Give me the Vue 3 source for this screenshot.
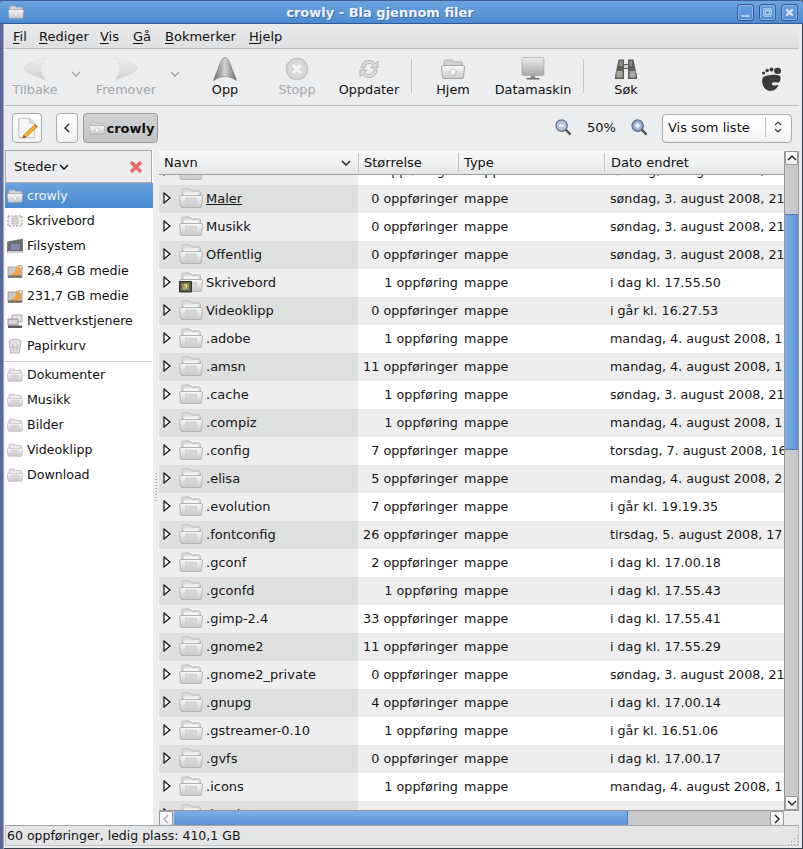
<script setup>
const menus = [
  { key: 'F', rest: 'il', w: 26 },
  { key: 'R', rest: 'ediger', w: 61 },
  { key: 'V', rest: 'is', w: 33 },
  { key: 'G', rest: 'å', w: 32 },
  { key: 'B', rest: 'okmerker', w: 84 },
  { key: 'H', rest: 'jelp', w: 40 },
]

const tools = [
  { label: 'Tilbake', icon: 'i-back', w: 60, off: true },
  { arrow: true, w: 21 },
  { label: 'Fremover', icon: 'i-forward', w: 80, off: true },
  { arrow: true, w: 18 },
  { label: 'Opp', icon: 'i-up', w: 82 },
  { label: 'Stopp', icon: 'i-stop', w: 62, off: true },
  { label: 'Oppdater', icon: 'i-reload', w: 82 },
  { sep: true, ml: 1 },
  { label: 'Hjem', icon: 'i-home', w: 82 },
  { label: 'Datamaskin', icon: 'i-computer', w: 78 },
  { sep: true, ml: 11 },
  { label: 'Søk', icon: 'i-binoculars', w: 84 },
]

const places = [
  { name: 'crowly', icon: 'i-home', active: true },
  { name: 'Skrivebord', icon: 'i-desktop' },
  { name: 'Filsystem', icon: 'i-filesystem' },
  { name: '268,4 GB medie', icon: 'i-drive' },
  { name: '231,7 GB medie', icon: 'i-drive' },
  { name: 'Nettverkstjenere', icon: 'i-network' },
  { name: 'Papirkurv', icon: 'i-trash' },
]

const bookmarks = ['Dokumenter', 'Musikk', 'Bilder', 'Videoklipp', 'Download']

const sun = 'søndag, 3. august 2008, 21'
const mon = 'mandag, 4. august 2008, 1'

const files = [
  ['Download', '0 oppføringer', sun],
  ['Maler', '0 oppføringer', sun],
  ['Musikk', '0 oppføringer', sun],
  ['Offentlig', '0 oppføringer', sun],
  ['Skrivebord', '1 oppføring', 'i dag kl. 17.55.50'],
  ['Videoklipp', '0 oppføringer', 'i går kl. 16.27.53'],
  ['.adobe', '1 oppføring', mon],
  ['.amsn', '11 oppføringer', mon],
  ['.cache', '1 oppføring', sun],
  ['.compiz', '1 oppføring', mon],
  ['.config', '7 oppføringer', 'torsdag, 7. august 2008, 16'],
  ['.elisa', '5 oppføringer', 'mandag, 4. august 2008, 2'],
  ['.evolution', '7 oppføringer', 'i går kl. 19.19.35'],
  ['.fontconfig', '26 oppføringer', 'tirsdag, 5. august 2008, 17'],
  ['.gconf', '2 oppføringer', 'i dag kl. 17.00.18'],
  ['.gconfd', '1 oppføring', 'i dag kl. 17.55.43'],
  ['.gimp-2.4', '33 oppføringer', 'i dag kl. 17.55.41'],
  ['.gnome2', '11 oppføringer', 'i dag kl. 17.55.29'],
  ['.gnome2_private', '0 oppføringer', sun],
  ['.gnupg', '4 oppføringer', 'i dag kl. 17.00.14'],
  ['.gstreamer-0.10', '1 oppføring', 'i går kl. 16.51.06'],
  ['.gvfs', '0 oppføringer', 'i dag kl. 17.00.17'],
  ['.icons', '1 oppføring', mon],
  ['.local', '3 oppføringer', 'i dag kl. 17.00.14'],
]
</script>

<template>
  <div class="window">
    <!-- shared icons -->
    <svg class="defs" xmlns="http://www.w3.org/2000/svg">
      <defs>
        <linearGradient id="g-folder" x1="0" y1="0" x2="0" y2="1">
          <stop offset="0" stop-color="#fafafa" />
          <stop offset="1" stop-color="#c8c8c8" />
        </linearGradient>
        <linearGradient id="g-back" x1="0" y1="0" x2="0" y2="1">
          <stop offset="0" stop-color="#eeeff0" />
          <stop offset="1" stop-color="#cdcecf" />
        </linearGradient>
        <linearGradient id="g-up" x1="0" y1="0" x2="1" y2="0">
          <stop offset="0" stop-color="#6a6a6a" />
          <stop offset="0.5" stop-color="#d4d4d4" />
          <stop offset="1" stop-color="#6a6a6a" />
        </linearGradient>
        <linearGradient id="g-screen" x1="0" y1="0" x2="0" y2="1">
          <stop offset="0" stop-color="#ececec" />
          <stop offset="1" stop-color="#a8a8a8" />
        </linearGradient>
      </defs>
      <symbol id="i-folder" viewBox="0 0 24 24">
        <path d="M3 9V4.500Q3 3 4.500 3H11L13 5H20Q21.500 5 21.500 6.500V9Z" fill="#dcdcdc" stroke="#b8b8b8" />
        <path d="M5 6.500H19V10H5Z" fill="#f5f5f5" />
        <path d="M2 9.500H22Q23.500 9.500 23.500 11L22.500 20Q22.300 21.500 21 21.500H3Q1.700 21.500 1.500 20L.5 11Q.5 9.500 2 9.500Z" fill="url(#g-folder)" stroke="#b4b4b4" />
        <path d="M6.500 12H17.500V18H6.500Z" fill="#d6d6d6" stroke="#c4c4c4" stroke-width=".5" />
      </symbol>
      <symbol id="i-folder-emblem" viewBox="0 0 24 24">
        <use href="#i-folder" width="24" height="24" />
        <path d="M.5 11.500H12.500V22H.5Z" fill="#5c5e48" stroke="#2e2e28" />
        <path d="M3 13.500H10V20H3Z" fill="#94927a" />
        <path d="M5 15H7.500V16.500L6.500 17.500V18.500" fill="none" stroke="#f2d94a" stroke-width="1.300" />
      </symbol>
      <symbol id="i-back" viewBox="0 0 24 24">
        <path d="M23 .5C16 3.500 1 6.500 .5 11.500C1 16.500 15 19 23 23.500C19 18 18 15 18 12C18 8.500 20 4.500 23 .5Z" fill="url(#g-back)" stroke="#d6d7d8" stroke-width=".5" />
      </symbol>
      <symbol id="i-forward" viewBox="0 0 24 24">
        <path d="M1 .5C8 3.500 23 6.500 23.500 11.500C23 16.500 9 19 1 23.500C5 18 6 15 6 12C6 8.500 4 4.500 1 .5Z" fill="url(#g-back)" stroke="#d6d7d8" stroke-width=".5" />
      </symbol>
      <symbol id="i-up" viewBox="0 0 24 24">
        <path d="M12 .5C9 1 8 4 6 9C4 15 2 19 .5 23.500C5 20.500 9 19.500 12 19.500C15 19.500 19 20.500 23.500 23.500C22 19 20 15 18 9C16 4 15 1 12 .5Z" fill="url(#g-up)" stroke="#6a6a6a" stroke-width=".5" />
      </symbol>
      <symbol id="i-stop" viewBox="0 0 24 24">
        <circle cx="12" cy="12" r="10.500" fill="#d8d9da" stroke="#c2c3c4" stroke-width="1.500" />
        <path d="M8 8L16 16M16 8L8 16" stroke="#f6f6f6" stroke-width="3" />
      </symbol>
      <symbol id="i-reload" viewBox="0 0 24 24">
        <path d="M4 11C4.500 6 8 3.500 12 3.500C15 3.500 17 4.500 18.500 6.500L21 4V11H14L16.500 8.500C15.500 7.300 14 6.500 12 6.500C9.500 6.500 7.800 8.300 7.500 11Z" fill="#d9dadb" stroke="#a9aaab" stroke-width=".8" />
        <path d="M20 13C19.500 18 16 20.500 12 20.500C9 20.500 7 19.500 5.500 17.500L3 20V13H10L7.500 15.500C8.500 16.700 10 17.500 12 17.500C14.500 17.500 16.200 15.700 16.500 13Z" fill="#d9dadb" stroke="#a9aaab" stroke-width=".8" />
      </symbol>
      <symbol id="i-home" viewBox="0 0 24 24">
        <path d="M3 9V4.500Q3 3 4.500 3H11L13 5H20Q21.500 5 21.500 6.500V9Z" fill="#d2d2d2" stroke="#b0b0b0" />
        <path d="M2 8.500H22Q23.500 8.500 23.500 10L22.500 20Q22.300 21.500 21 21.500H3Q1.700 21.500 1.500 20L.5 10Q.5 8.500 2 8.500Z" fill="url(#g-folder)" stroke="#a5a5a5" />
        <path d="M12 11.500L16 15H14.500V18H9.500V15H8Z" fill="#f4f4f4" stroke="#aaa" stroke-width=".6" />
      </symbol>
      <symbol id="i-computer" viewBox="0 0 24 24">
        <rect x="1" y=".5" width="22" height="18" rx="1.500" fill="url(#g-screen)" stroke="#9d9d9d" stroke-width=".6" />
        <path d="M10 18.500H14L14.500 21H9.500Z" fill="#8c8c8c" />
        <path d="M5.500 21H18.500V22.500H5.500Z" fill="#6f6f6f" />
      </symbol>
      <symbol id="i-binoculars" viewBox="0 0 24 24">
        <path d="M4.500 2.500H10V7H14V2.500H19.500L23 19V22H14V12H10V22H1V19Z" fill="#5d5f5a" />
        <path d="M2.500 14H8.500V20.500H2.500ZM15.500 14H21.500V20.500H15.500Z" fill="#a4a69f" />
        <path d="M6 4H8.500V9H5ZM15.500 4H18V9H15.500Z" fill="#8d8f88" />
        <path d="M10 8H14V11H10Z" fill="#cfd0ca" />
      </symbol>
      <symbol id="i-foot" viewBox="0 0 24 30">
        <circle cx="2.800" cy="7" r="1.800" fill="#3a3a3a" />
        <circle cx="7" cy="4" r="2" fill="#3a3a3a" />
        <circle cx="12" cy="2.800" r="2.300" fill="#3a3a3a" />
        <ellipse cx="19" cy="4.500" rx="4" ry="3.500" fill="#3a3a3a" />
        <path d="M2 12C6 8.500 18 8 22 10.500C23.500 15 21 19 18 18C15.500 17 11.500 18 12.500 20C13.500 22 17 21.500 20 20.500C19 25 14 28.500 9 27.500C3 26.500 -.5 18 2 12Z" fill="#3a3a3a" />
      </symbol>
      <symbol id="i-note" viewBox="0 0 24 24">
        <path d="M3 1.500H15L20 6.500V22.500H3Z" fill="#f4f4f4" stroke="#bdbdbd" />
        <path d="M15 1.500V6.500H20" fill="#dcdcdc" stroke="#bdbdbd" />
        <path d="M21 8L23.500 10.500L11 22L7.500 23L8.500 19.500Z" fill="#f0b429" stroke="#b5741a" stroke-width=".7" />
        <path d="M8.500 19.500L7.500 23L11 22Z" fill="#7a4a1e" />
        <path d="M20 9L22.500 11.500L23.500 10.500L21 8Z" fill="#d9534a" />
      </symbol>
      <symbol id="i-desktop" viewBox="0 0 16 16">
        <path d="M1 3H15V13H1Z" fill="#efefef" stroke="#8d8d8d" stroke-dasharray="2 1.500" />
        <path d="M5 5H11V11H5Z" fill="#d5d5d5" stroke="#bdbdbd" />
      </symbol>
      <symbol id="i-filesystem" viewBox="0 0 16 16">
        <path d="M.5 4L15.500 1V14.500H.5Z" fill="#6d6d6d" stroke="#555" stroke-width=".6" />
        <path d="M4 6H13V12H4Z" fill="#7f86b2" />
        <path d="M.5 13H15.500V15H.5Z" fill="#cfcfcf" />
      </symbol>
      <symbol id="i-drive" viewBox="0 0 16 16">
        <path d="M1 4H15V14.500H1Z" fill="#c9c9c9" stroke="#8b8b8b" stroke-width=".7" />
        <path d="M11 2.500H15.500V6H11Z" fill="#dedede" stroke="#9a9a9a" stroke-width=".6" />
        <path d="M9.500 2.500A6 6 0 1 1 3 11.500C7 11 9 8 9.500 2.500Z" fill="#eea345" />
        <path d="M1 12.500H15V14.500H1Z" fill="#6d6d6d" />
      </symbol>
      <symbol id="i-network" viewBox="0 0 16 16">
        <path d="M5 2H15V9H5Z" fill="#e8e8e8" stroke="#8f8f8f" stroke-width=".8" />
        <path d="M1 6H11V12H1Z" fill="#d6d6d6" stroke="#7c7c7c" stroke-width=".8" />
        <path d="M1 12.500H15V15H1Z" fill="#5c5c5c" />
      </symbol>
      <symbol id="i-trash" viewBox="0 0 16 16">
        <path d="M2 3C4 .5 12 .5 14 3L12.500 15H3.500Z" fill="#dfdfdf" stroke="#a9a9a9" stroke-width=".8" />
        <path d="M5 6L7 13M11 6L9 13M4 9L12 9" stroke="#b6b6b6" stroke-width=".8" />
      </symbol>
    </svg>

    <header class="titlebar">
      <svg class="title-icon"><use href="#i-home" /></svg>
      <span class="title">crowly - Bla gjennom filer</span>
      <div class="wm-buttons">
        <span class="wm-btn">
          <svg viewBox="0 0 16 16"><path d="M3.500 11.500H12.500V13H3.500Z" fill="none" stroke="#dbe7f5" /></svg>
        </span>
        <span class="wm-btn">
          <svg viewBox="0 0 16 16"><path d="M3.500 3.500H12.500V12.500H3.500ZM5.500 5.500H10.500V10.500H5.500Z" fill="none" stroke="#dbe7f5" /></svg>
        </span>
        <span class="wm-btn">
          <svg viewBox="0 0 16 16"><path d="M4 4L12 12M12 4L4 12" stroke="#dbe7f5" stroke-width="3" /></svg>
        </span>
      </div>
    </header>

    <nav class="menubar">
      <span v-for="m in menus" :key="m.key" class="menu-item" :style="{ width: m.w + 'px' }"><u>{{ m.key }}</u>{{ m.rest }}</span>
    </nav>

    <div class="toolbar">
      <template v-for="(t, i) in tools" :key="i">
        <span v-if="t.sep" class="tool-sep" :style="{ marginLeft: t.ml + 'px' }"></span>
        <span v-else-if="t.arrow" class="tool-arrow" :style="{ width: t.w + 'px' }">
          <svg width="10" height="6" viewBox="0 0 10 6"><path d="M1 1L5 5L9 1" fill="none" stroke="#a3a4a5" stroke-width="1.300" /></svg>
        </span>
        <div v-else class="tool" :class="{ off: t.off }" :style="{ width: t.w + 'px' }">
          <svg class="tool-icon"><use :href="'#' + t.icon" /></svg>
          <span>{{ t.label }}</span>
        </div>
      </template>
      <svg class="foot"><use href="#i-foot" /></svg>
    </div>

    <div class="locationbar">
      <button class="btn edit-btn"><svg class="edit-icon"><use href="#i-note" /></svg></button>
      <button class="btn back-btn">
        <svg width="6" height="10" viewBox="0 0 6 10"><path d="M5 1L1 5L5 9" fill="none" stroke="#222" stroke-width="1.400" /></svg>
      </button>
      <button class="btn crumb">
        <svg class="crumb-icon"><use href="#i-home" /></svg>
        crowly
      </button>
      <div class="zoom-group">
        <svg class="zoom-icon" viewBox="0 0 18 18">
          <path d="M11 11L16.500 16.500" stroke="#555" stroke-width="2.500" />
          <circle cx="7" cy="7" r="6" fill="#b4c4da" stroke="#5b6a7c" stroke-width="1.300" />
          <path d="M4 7H10" stroke="#f4f6fa" stroke-width="2" />
        </svg>
        <span class="zoom-level">50%</span>
        <svg class="zoom-icon" viewBox="0 0 18 18">
          <path d="M11 11L16.500 16.500" stroke="#555" stroke-width="2.500" />
          <circle cx="7" cy="7" r="6" fill="#8fabd6" stroke="#5b6a7c" stroke-width="1.300" />
          <path d="M4 7H10M7 4V10" stroke="#f4f6fa" stroke-width="2" />
        </svg>
      </div>
      <div class="combo">
        <span>Vis som liste</span>
        <span class="combo-sep"></span>
        <svg width="8" height="14" viewBox="0 0 8 14"><path d="M1 5L4 2L7 5M1 9L4 12L7 9" fill="none" stroke="#333" stroke-width="1.200" /></svg>
      </div>
    </div>

    <div class="panes">
      <aside class="sidebar">
        <div class="side-head">
          <span>Steder</span>
          <svg class="side-chevron" width="10" height="6" viewBox="0 0 10 6"><path d="M1 1L5 5L9 1" fill="none" stroke="#111" stroke-width="1.500" /></svg>
          <svg class="side-close" width="14" height="14" viewBox="0 0 14 14">
            <path d="M2 2L12 12M12 2L2 12" stroke="#e8696a" stroke-width="3.500" />
          </svg>
        </div>
        <ul class="places">
          <li v-for="p in places" :key="p.name" class="place" :class="{ active: p.active }">
            <svg class="place-icon"><use :href="'#' + p.icon" /></svg>
            {{ p.name }}
          </li>
        </ul>
        <div class="places-sep"></div>
        <ul class="places">
          <li v-for="b in bookmarks" :key="b" class="place">
            <svg class="place-icon"><use href="#i-folder" /></svg>
            {{ b }}
          </li>
        </ul>
      </aside>

      <div class="splitter"><span class="grip"></span></div>

      <section class="browser">
        <div class="browser-top">
          <div class="listing">
            <div class="head-row">
              <div class="col-head first">Navn
                <svg class="sort" width="10" height="6" viewBox="0 0 10 6"><path d="M1 1L5 5L9 1" fill="none" stroke="#222" stroke-width="1.500" /></svg>
              </div>
              <div class="col-head">Størrelse</div>
              <div class="col-head">Type</div>
              <div class="col-head last">Dato endret</div>
            </div>
            <div class="rows">
              <div v-for="(f, i) in files" :key="f[0]" class="row" :class="{ shaded: i % 2 === 1 }">
                <div class="cell name">
                  <svg class="expander" width="8" height="12" viewBox="0 0 8 12"><path d="M1 1L7 6L1 11Z" fill="#fff" stroke="#000" stroke-width="1.100" /></svg>
                  <svg class="file-icon"><use :href="f[0] === 'Skrivebord' ? '#i-folder-emblem' : '#i-folder'" /></svg>
                  <span :class="{ hover: f[0] === 'Maler' }">{{ f[0] }}</span>
                </div>
                <div class="cell size">{{ f[1] }}</div>
                <div class="cell type">mappe</div>
                <div class="cell date">{{ f[2] }}</div>
              </div>
            </div>
          </div>
          <div class="vscroll">
            <span class="sb-btn">
              <svg width="10" height="6" viewBox="0 0 10 6"><path d="M1 5L5 1L9 5" fill="none" stroke="#222" stroke-width="1.400" /></svg>
            </span>
            <span class="vthumb"></span>
            <span class="sb-fill"></span>
            <span class="sb-btn">
              <svg width="10" height="6" viewBox="0 0 10 6"><path d="M1 1L5 5L9 1" fill="none" stroke="#222" stroke-width="1.400" /></svg>
            </span>
          </div>
        </div>
        <div class="hscroll">
          <span class="sb-btn small">
            <svg width="6" height="10" viewBox="0 0 6 10"><path d="M5 1L1 5L5 9" fill="none" stroke="#aaa" stroke-width="1.400" /></svg>
          </span>
          <span class="hthumb"></span>
          <span class="sb-fill"></span>
          <span class="sb-btn small">
            <svg width="6" height="10" viewBox="0 0 6 10"><path d="M1 1L5 5L1 9" fill="none" stroke="#222" stroke-width="1.400" /></svg>
          </span>
          <span class="corner"></span>
        </div>
      </section>
    </div>

    <footer class="statusbar">
      <span>60 oppføringer, ledig plass: 410,1 GB</span>
      <span class="resize-grip"></span>
    </footer>
  </div>
</template>

<style>
html,
body {
  margin: 0;
  background: #eaebec;
}
</style>

<style scoped>
.window {
  width: 803px;
  height: 849px;
  box-sizing: border-box;
  display: flex;
  flex-direction: column;
  overflow: hidden;
  padding: 0 4px 3px 5px;
  background: #eaebec;
  box-shadow: inset 3px 0 0 #56689c, inset 4px 0 0 #a7a9ad, inset -1px 0 0 #3a3f4c, inset 0 -1px 0 #3a3f4c;
  font-family: "DejaVu Sans", sans-serif;
  font-size: 13px;
  color: #111;
}

.defs {
  display: block;
  width: 0;
  height: 0;
  flex: none;
}

.titlebar {
  flex: none;
  height: 24px;
  margin: 0 -4px 0 -5px;
  display: flex;
  align-items: center;
  justify-content: center;
  background: linear-gradient(#6da4e0, #4d8ad2);
  border-top: 1px solid #3a5f96;
  border-bottom: 1px solid #2f5a96;
  box-sizing: border-box;
  border-radius: 3px 3px 0 0;
  position: relative;
}

.title {
  color: #f2f6fb;
  font-weight: bold;
  font-size: 13px;
  text-shadow: 1px 1px 0 #3a6bab;
  margin-left: -43px;
}

/* the two ends of the bar sit over the centred title */
.title-icon {
  position: absolute;
  left: 8px;
  top: 3px;
  width: 16px;
  height: 16px;
}

.wm-buttons {
  position: absolute;
  right: 5px;
  top: 3px;
  display: flex;
  gap: 5px;
}

.wm-btn {
  width: 17px;
  height: 17px;
  box-sizing: border-box;
  border: 1px solid #2e5a97;
  border-radius: 3px;
  box-shadow: inset 0 0 0 1px #8cb7e6;
  display: flex;
  align-items: center;
  justify-content: center;
}

.wm-btn svg {
  width: 13px;
  height: 13px;
}

.menubar {
  flex: none;
  height: 25px;
  display: flex;
  align-items: center;
  padding-left: 8px;
  box-sizing: border-box;
  background: linear-gradient(#e9eaeb, #dfe0e2);
  border-bottom: 1px solid #b9babb;
}

.menu-item {
  flex: none;
}

.menu-item u {
  text-underline-offset: 2px;
}

.toolbar {
  flex: none;
  height: 57px;
  display: flex;
  align-items: flex-start;
  box-sizing: border-box;
  background: #ecedee;
  border-bottom: 1px solid #b9babb;
}

.tool {
  flex: none;
  display: flex;
  flex-direction: column;
  align-items: center;
  padding-top: 8px;
  gap: 1px;
  font-size: 12.8px;
}

.tool.off {
  color: #a5a6a8;
}

.tool-icon {
  width: 24px;
  height: 24px;
}

.tool-arrow {
  flex: none;
  height: 46px;
  display: flex;
  align-items: center;
  justify-content: center;
  padding-top: 4px;
  box-sizing: border-box;
}

.tool-sep {
  flex: none;
  width: 1px;
  height: 34px;
  margin-top: 10px;
  background: #c3c4c6;
}

.foot {
  width: 21px;
  height: 26px;
  margin: 18px 17px 0 auto;
}

.locationbar {
  flex: none;
  height: 44px;
  display: flex;
  align-items: center;
  padding: 0 7px;
  background: #ecedee;
  box-sizing: border-box;
}

.btn {
  font: inherit;
  color: inherit;
  box-sizing: border-box;
  height: 30px;
  display: flex;
  align-items: center;
  justify-content: center;
  padding: 0;
  border: 1px solid #a9aaac;
  border-radius: 4px;
  background: linear-gradient(#fff, #f0f1f2);
}

.edit-btn {
  width: 30px;
}

.edit-icon {
  width: 22px;
  height: 22px;
}

.back-btn {
  width: 22px;
  margin-left: 14px;
}

.crumb {
  width: 75px;
  margin-left: 5px;
  padding-left: 2px;
  gap: 2px;
  font-weight: bold;
  background: linear-gradient(#d2d3d5, #c3c4c6);
  border-color: #97989a;
}

.crumb-icon {
  width: 16px;
  height: 16px;
}

.zoom-group {
  margin-left: auto;
  display: flex;
  align-items: center;
  padding-bottom: 2px;
}

.zoom-icon {
  width: 17px;
  height: 17px;
}

.zoom-level {
  width: 59px;
  text-align: center;
}

.combo {
  width: 130px;
  height: 29px;
  margin-left: 14px;
  box-sizing: border-box;
  display: flex;
  align-items: center;
  padding: 0 9px 2px 5px;
  border: 1px solid #a9aaac;
  border-radius: 4px;
  background: linear-gradient(#fff 40%, #eeeff0);
}

.combo-sep {
  width: 1px;
  height: 20px;
  margin: 0 8px 0 auto;
  background: #bbbcbe;
}

.panes {
  flex: 1;
  min-height: 0;
  display: flex;
  background: #ecedee;
}

.sidebar {
  flex: none;
  width: 148px;
  display: flex;
  flex-direction: column;
  background: #fff;
  font-size: 12.6px;
}

.side-head {
  flex: none;
  height: 33px;
  box-sizing: border-box;
  display: flex;
  align-items: center;
  padding: 0 8px;
  gap: 2px;
  background: #ecedee;
  border: 1px solid #a9aaac;
  margin-right: 1px;
  font-size: 13px;
}

.side-close {
  margin-left: auto;
}

.places {
  list-style: none;
  margin: 0;
  padding: 0;
}

.place {
  height: 25px;
  display: flex;
  align-items: center;
  gap: 4px;
  padding-left: 2px;
  white-space: nowrap;
}

.place.active {
  background: linear-gradient(#6aa2df, #4887d0);
  color: #f2f6fb;
}

.place-icon {
  width: 16px;
  height: 16px;
}

.places-sep {
  height: 1px;
  margin: 3px 1px 0 0;
  background: #c9c9c9;
}

.splitter {
  flex: none;
  width: 6px;
  display: flex;
  align-items: center;
  justify-content: center;
}

.grip {
  width: 2px;
  height: 30px;
  background: repeating-linear-gradient(#b4b5b7 0 1px, transparent 1px 3px);
}

.browser {
  flex: 1;
  min-width: 0;
  display: flex;
  flex-direction: column;
  padding-top: 1px;
}

.browser-top {
  flex: 1;
  min-height: 0;
  display: flex;
}

.listing {
  width: 625px;
  overflow: hidden;
  background: #fff;
}

.head-row {
  height: 24px;
  display: grid;
  grid-template-columns: 199px 100px 146px 180px;
  box-sizing: border-box;
  background: linear-gradient(#f8f8f8, #f0f1f1 50%, #e2e3e4);
  border-bottom: 1px solid #9c9d9f;
  position: relative;
  z-index: 1;
}

.col-head {
  display: flex;
  align-items: center;
  padding-left: 5px;
  border-left: 1px solid #c4c5c7;
  margin: 2px 0;
  box-sizing: border-box;
}

.col-head.first {
  border-left: 0;
  justify-content: space-between;
  padding-right: 7px;
}

.col-head.last {
  padding-left: 6px;
}

.rows {
  margin-top: -18px;
}

.row {
  height: 28px;
  display: grid;
  grid-template-columns: 199px 100px 146px 180px;
  white-space: nowrap;
}

.cell {
  display: flex;
  align-items: center;
  overflow: hidden;
  background: #fff;
  color: #151515;
  box-sizing: border-box;
  padding-bottom: 2px;
  font-size: 12.8px;
}

.row.shaded .cell {
  background: #eeeeee;
}

.cell.name {
  background: #eeeeee;
  padding-left: 4px;
  font-size: 13px;
}

.row.shaded .cell.name {
  background: #dedfdf;
}

.expander {
  flex: none;
}

.file-icon {
  flex: none;
  width: 24px;
  height: 24px;
  margin: 0 3px 0 8px;
}

.hover {
  text-decoration: underline;
}

.size {
  justify-content: flex-end;
}

.type {
  padding-left: 6px;
}

.date {
  padding-left: 6px;
  font-size: 12.7px;
}

.vscroll {
  flex: none;
  width: 15px;
  box-sizing: border-box;
  display: flex;
  flex-direction: column;
  background: #c8cacb;
  border-left: 1px solid #96989a;
  border-right: 1px solid #96989a;
}

.sb-btn {
  flex: none;
  height: 14px;
  box-sizing: border-box;
  display: flex;
  align-items: center;
  justify-content: center;
  background: linear-gradient(#fff, #eeeff0);
  border: 1px solid #96989a;
  border-radius: 2px;
}

.sb-btn.small {
  width: 14px;
  height: 15px;
}

.vthumb {
  flex: none;
  height: 236px;
  margin-top: 49px;
  box-sizing: border-box;
  background: linear-gradient(90deg, #7fb0e6, #5a94d8);
  border-top: 1px solid #4a7cb8;
  border-bottom: 1px solid #4a7cb8;
}

.sb-fill {
  flex: 1;
}

.hscroll {
  flex: none;
  height: 15px;
  display: flex;
  background: #c8cacb;
  box-sizing: border-box;
  border-top: 1px solid #96989a;
}

.hthumb {
  flex: none;
  width: 454px;
  margin-left: 1px;
  background: linear-gradient(#7fb0e6, #5a94d8);
  border-right: 1px solid #4a7cb8;
  box-sizing: border-box;
}

.corner {
  flex: none;
  width: 15px;
  background: #ecedee;
}

.statusbar {
  flex: none;
  height: 21px;
  box-sizing: border-box;
  display: flex;
  align-items: center;
  justify-content: space-between;
  padding-left: 1px;
  background: #e4e5e6;
  border: 1px solid #c4c5c7;
  border-top-color: #a3a4a6;
  font-size: 12.5px;
}

.resize-grip {
  width: 11px;
  height: 11px;
  align-self: flex-end;
  background: radial-gradient(circle, #a5a6a8 0.7px, transparent 0.9px) 0 0 / 3px 3px;
  clip-path: polygon(100% 0, 100% 100%, 0 100%);
}
</style>
